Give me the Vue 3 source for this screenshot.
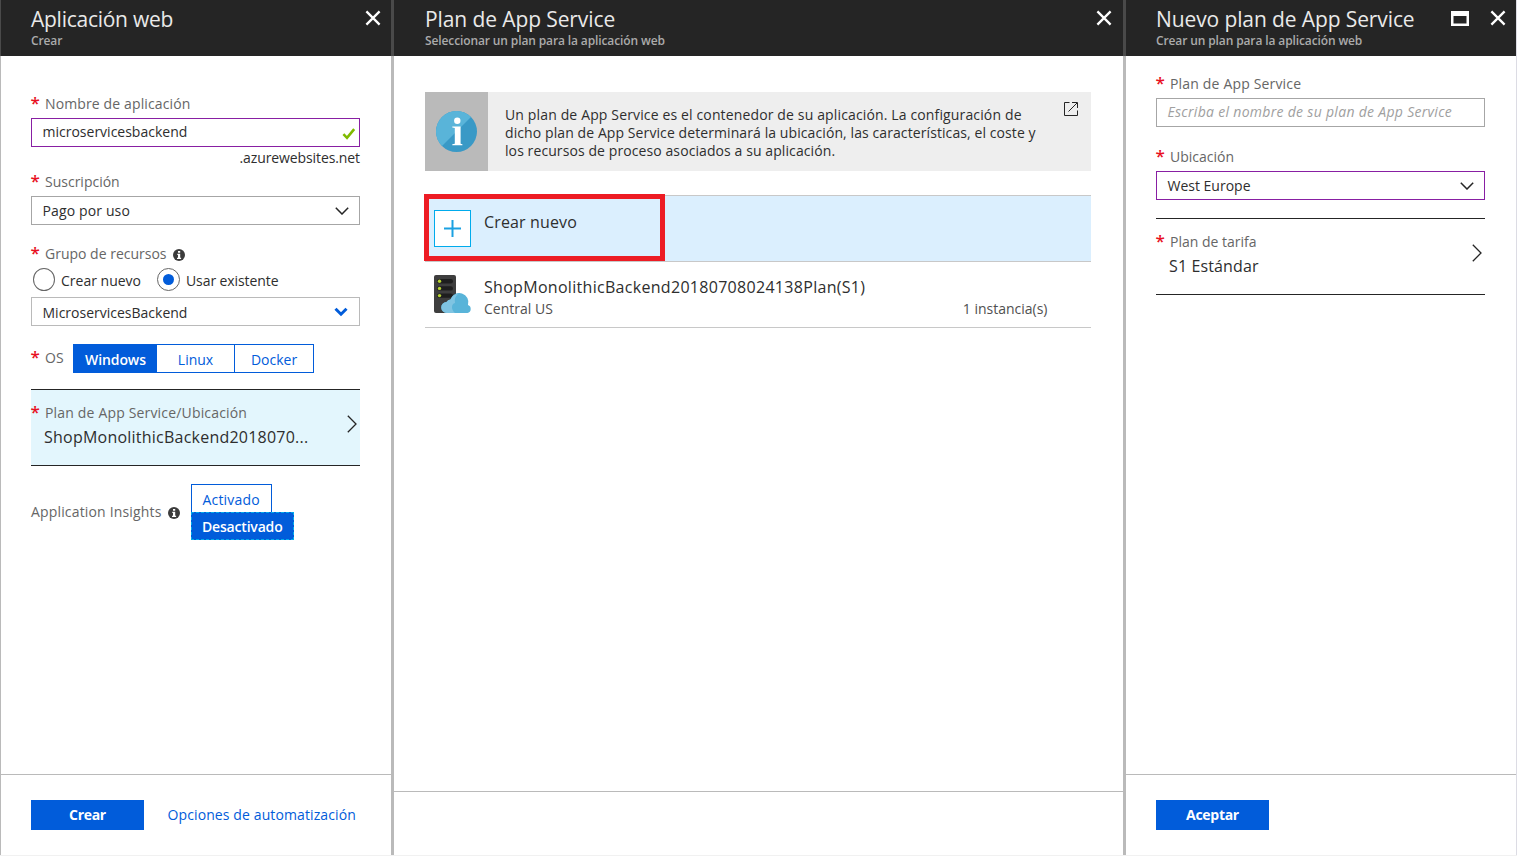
<script setup>
import { ref } from 'vue'

const appName = ref('microservicesbackend')
const systems = [
  { name: 'Windows', cls: 'win' },
  { name: 'Linux', cls: 'lin' },
  { name: 'Docker', cls: 'doc' }
]
const selectedOs = ref('Windows')
</script>

<template>
  <div class="portal">
    <div class="edge"><i></i></div>

    <section class="blade">
      <header class="head">
        <div>
          <h1 class="t1">Aplicación web</h1>
          <p>Crear</p>
        </div>
        <div class="tools">
          <svg width="16" height="16" viewBox="0 0 16 16"><path d="M1.4 1.4 14.6 14.6M14.6 1.4 1.4 14.6" /></svg>
        </div>
      </header>

      <main class="body first">
        <div class="label w1"><b>*</b><span>Nombre de aplicación</span></div>
        <div class="field active">
          <span>{{ appName }}</span>
          <svg class="check" width="14" height="12" viewBox="0 0 14 12"><path d="M1.4 6.2 5 9.8 12.2 1.2" /></svg>
        </div>
        <div class="suffix">.azurewebsites.net</div>

        <div class="label lb-sub"><b>*</b><span>Suscripción</span></div>
        <div class="field select">
          <span class="w1">Pago por uso</span>
          <svg class="chev" width="14" height="8" viewBox="0 0 14 8"><path d="M.8.8 7 7 13.2.8" /></svg>
        </div>

        <div class="label lb-group">
          <b>*</b><span>Grupo de recursos</span>
          <svg class="info" width="12" height="12" viewBox="0 0 12 12"><circle cx="6" cy="6" r="6" /><path d="M5 2h2.2v1.8H5zM4.3 4.8h2.9v3.9h.9V10H4V8.7h1V6h-.7z" /></svg>
        </div>
        <div class="radios">
          <i class="radio"></i><span>Crear nuevo</span>
          <i class="radio on"></i><span class="ue">Usar existente</span>
        </div>
        <div class="field select group">
          <span>MicroservicesBackend</span>
          <svg class="chev bold" width="14" height="10" viewBox="0 0 14 10"><path d="M1.5 1.8 7 7.2 12.5 1.8" /></svg>
        </div>

        <div class="os">
          <div class="label"><b>*</b><span>OS</span></div>
          <div class="seg">
            <span v-for="s in systems" :key="s.name" :class="[s.cls, { sel: s.name === selectedOs }]">{{ s.name }}</span>
          </div>
        </div>

        <div class="card blue">
          <div>
            <div class="label w2"><b>*</b><span>Plan de App Service/Ubicación</span></div>
            <div class="value w3">ShopMonolithicBackend2018070...</div>
          </div>
          <svg class="next" width="10" height="18" viewBox="0 0 10 18"><path d="M.8.8 9 9 .8 17.2" /></svg>
        </div>

        <div class="insights">
          <span class="ai">Application Insights</span>
          <svg class="info" width="12" height="12" viewBox="0 0 12 12"><circle cx="6" cy="6" r="6" /><path d="M5 2h2.2v1.8H5zM4.3 4.8h2.9v3.9h.9V10H4V8.7h1V6h-.7z" /></svg>
          <div class="toggle">
            <span class="act">Activado</span>
            <span class="deact">Desactivado</span>
          </div>
        </div>
      </main>

      <footer class="foot">
        <button class="primary">Crear</button>
        <a class="link">Opciones de automatización</a>
      </footer>
    </section>

    <div class="edge"><i></i></div>

    <section class="blade">
      <header class="head mid">
        <div>
          <h1 class="t2">Plan de App Service</h1>
          <p>Seleccionar un plan para la aplicación web</p>
        </div>
        <div class="tools">
          <svg width="16" height="16" viewBox="0 0 16 16"><path d="M1.4 1.4 14.6 14.6M14.6 1.4 1.4 14.6" /></svg>
        </div>
      </header>

      <main class="body second">
        <div class="notice">
          <div class="mark">
            <svg width="41" height="41" viewBox="0 0 41 41">
              <circle cx="20.5" cy="20.5" r="20.5" fill="#3999c6" />
              <path d="M6 35A20.5 20.5 0 1 1 35 6z" fill="#59b4d9" />
              <circle cx="21.3" cy="9.8" r="3.2" fill="#fff" />
              <path d="M16.3 15.5h8.3v17.2l1.8.5v1H16.3v-1l2.5-.5V17l-2.5-.5z" fill="#fff" />
            </svg>
          </div>
          <p>
            <span class="n1">Un plan de App Service es el contenedor de su aplicación. La configuración de</span>
            <span class="n2">dicho plan de App Service determinará la ubicación, las características, el coste y</span>
            <span class="n2">los recursos de proceso asociados a su aplicación.</span>
          </p>
          <svg class="ext" width="14" height="14" viewBox="0 0 14 14"><path d="M5.5.5h-5v13h13v-5M4.5 9.5 13 1M8 .5h5.5V6" /></svg>
        </div>

        <div class="row create">
          <div class="plus">
            <svg width="19" height="19" viewBox="0 0 19 19"><path d="M9.5 1v17M1 9.5h17" /></svg>
          </div>
          <span class="name">Crear nuevo</span>
          <div class="highlight"></div>
        </div>
        <div class="row plan">
          <svg class="server" width="38" height="39" viewBox="0 0 38 39">
            <path d="M2 0h18a2 2 0 0 1 2 2v36H2a2 2 0 0 1-2-2V2a2 2 0 0 1 2-2z" fill="#3e3e3e" />
            <g fill="#1e1e1e">
              <rect x="3" y="4" width="16" height="4.4" rx="2.2" />
              <rect x="3" y="11.2" width="16" height="4.4" rx="2.2" />
              <rect x="3" y="18.4" width="16" height="4.4" rx="2.2" />
            </g>
            <g fill="#b8d432">
              <circle cx="5.5" cy="6.2" r="1.7" />
              <circle cx="5.5" cy="13.4" r="1.7" />
              <circle cx="5.5" cy="20.6" r="1.7" />
            </g>
            <path d="M13 38a5.5 5.5 0 0 1-.5-11 5 5 0 0 1 4-2.5A9 9 0 0 1 34 30a4.200 4.200 0 0 1-.5 8z" fill="#59b4d9" />
            <path d="M13 38a5.5 5.5 0 0 1-.5-11 5 5 0 0 1 4-2.5A9 9 0 0 1 24 19a9 9 0 0 0-3 9c-4 1-4 7 0 10z" fill="#7fc4e2" />
          </svg>
          <div class="desc">
            <div class="name w4">ShopMonolithicBackend20180708024138Plan(S1)</div>
            <div class="meta"><span>Central US</span><span>1 instancia(s)</span></div>
          </div>
        </div>
      </main>

      <footer class="foot short"></footer>
    </section>

    <div class="edge"><i></i></div>

    <section class="blade">
      <header class="head">
        <div>
          <h1 class="t3">Nuevo plan de App Service</h1>
          <p>Crear un plan para la aplicación web</p>
        </div>
        <div class="tools">
          <svg class="max" width="18" height="15" viewBox="0 0 18 15"><path d="M0 0h18v15H0zM2.5 5v7.5h13V5z" /></svg>
          <svg width="16" height="16" viewBox="0 0 16 16"><path d="M1.4 1.4 14.6 14.6M14.6 1.4 1.4 14.6" /></svg>
        </div>
      </header>

      <main class="body third">
        <div class="label w2"><b>*</b><span>Plan de App Service</span></div>
        <div class="field"><em>Escriba el nombre de su plan de App Service</em></div>

        <div class="label lb-loc"><b>*</b><span>Ubicación</span></div>
        <div class="field select active">
          <span>West Europe</span>
          <svg class="chev" width="14" height="8" viewBox="0 0 14 8"><path d="M.8.8 7 7 13.2.8" /></svg>
        </div>

        <div class="card tier">
          <div>
            <div class="label"><b>*</b><span>Plan de tarifa</span></div>
            <div class="value w1">S1 Estándar</div>
          </div>
          <svg class="next" width="10" height="18" viewBox="0 0 10 18"><path d="M.8.8 9 9 .8 17.2" /></svg>
        </div>
      </main>

      <footer class="foot">
        <button class="primary">Aceptar</button>
      </footer>
    </section>

    <div class="edge last"><i></i></div>
  </div>
</template>

<style>
body {
  background: #f1f1f1;
}
</style>

<style scoped>
.portal {
  display: grid;
  grid-template-columns: 1px 390px 3px 729px 3px 390px 1px;
  height: 855px;
  overflow: hidden;
  background: #fff;
  color: #2e2e2e;
  font: 14px/20px "Open Sans", "Noto Sans", sans-serif;
  white-space: nowrap;
}
svg {
  display: block;
  flex: none;
}
.edge {
  background: #bababa;
}
.edge i {
  display: block;
  height: 56px;
  background: #4a4a4a;
}
.edge.last,
.edge.last i {
  background: #dcdce4;
}
.blade {
  display: flex;
  flex-direction: column;
  min-width: 0;
}

.head {
  display: flex;
  justify-content: space-between;
  height: 56px;
  box-sizing: border-box;
  padding: 7px 10px 0 30px;
  background: #252525;
}
.head.mid {
  padding: 7px 11px 0 31px;
}
.head h1 {
  margin: 0;
  font-size: 21px;
  line-height: 24px;
  font-weight: 400;
  color: #e9e9e9;
}
.head p {
  margin: 2px 0 0;
  font-size: 12px;
  line-height: 16px;
  font-weight: 600;
  color: #ababab;
  letter-spacing: -0.12px;
}
.head .t1 {
  letter-spacing: -0.26px;
}
.head .t2 {
  letter-spacing: -0.1px;
}
.head .t3 {
  letter-spacing: -0.11px;
}
.tools {
  display: flex;
  gap: 21px;
  margin-top: 3px;
  align-items: flex-start;
}
.tools path {
  fill: none;
  stroke: #fff;
  stroke-width: 2.3;
}
.tools .max {
  margin-top: 1px;
}
.tools .max path {
  fill: #fff;
  fill-rule: evenodd;
  stroke: none;
}

.body {
  flex: 1;
  padding: 0 31px 0 30px;
}
.first {
  padding-top: 38px;
}
.second {
  padding: 36px 32px 0 31px;
}
.third {
  padding-top: 18px;
}

.label {
  display: flex;
  height: 20px;
  color: #666;
}
.label b {
  width: 14px;
  font-size: 17px;
  font-weight: 600;
  color: #e81123;
  line-height: 18px;
  text-indent: -0.5px;
}
.w1 {
  letter-spacing: 0.13px;
}
.w2 {
  letter-spacing: 0.17px;
}
.w3 {
  letter-spacing: 0.23px;
}
.w4 {
  letter-spacing: 0.3px;
}
.field {
  display: flex;
  align-items: center;
  justify-content: space-between;
  box-sizing: border-box;
  height: 29px;
  margin-top: 4px;
  padding: 0 10px 2px 10.5px;
  border: 1px solid #a6a6a6;
}
.field.select {
  padding-bottom: 0;
}
.field.active {
  border-color: #881fa3;
}
.field em {
  color: #a0a0a0;
  letter-spacing: 0.3px;
}
.check {
  margin: 4px -7px 0 0;
}
.check path {
  fill: none;
  stroke: #7fba00;
  stroke-width: 2.6;
}
.chev {
  margin-top: 1px;
}
.chev path {
  fill: none;
  stroke: #252525;
  stroke-width: 1.5;
}
.chev.bold {
  margin: -2px 1px 0 0;
}
.chev.bold path {
  stroke: #015cda;
  stroke-width: 3;
}
.suffix {
  margin-top: 1px;
  text-align: right;
  letter-spacing: -0.1px;
}
.lb-sub {
  margin-top: 4px;
}
.lb-group {
  margin-top: 19px;
}
.lb-loc {
  margin-top: 20px;
}
.info {
  margin: 5px 0 0 6.5px;
}
.info circle {
  fill: #3c3c3c;
}
.info path {
  fill: #fff;
}
.radios {
  display: flex;
  align-items: center;
  height: 23px;
  margin-top: 4px;
  padding-left: 2px;
}
.radios span {
  margin: 2px 16px 0 6px;
}
.radios .ue {
  letter-spacing: -0.09px;
}
.radio {
  display: grid;
  place-items: center;
  box-sizing: border-box;
  width: 22px;
  height: 23px;
  border: 1px solid #666;
  border-radius: 50%;
}
.radio.on {
  width: 23px;
}
.radio.on::after {
  content: "";
  width: 11px;
  height: 11px;
  border-radius: 50%;
  background: #015cda;
}
.field.group {
  margin-top: 6px;
  padding-top: 2px;
  border-color: #bababa;
}

.os {
  display: flex;
  margin-top: 18px;
}
.os .label {
  width: 42px;
  margin-top: 4px;
}
.seg {
  display: flex;
  box-sizing: border-box;
  height: 29px;
  width: 241px;
  border: 1px solid #015cda;
}
.seg span {
  flex: none;
  box-sizing: border-box;
  padding-top: 5px;
  height: 27px;
  text-align: center;
  color: #015cda;
}
.seg .win {
  width: 83px;
  letter-spacing: -0.1px;
}
.seg .lin {
  width: 77px;
}
.seg .doc {
  width: 79px;
  border-left: 1px solid #015cda;
}
.seg .sel {
  background: #015cda;
  color: #fff;
  font-weight: 600;
}
.card {
  display: flex;
  justify-content: space-between;
  box-sizing: border-box;
  height: 77px;
  padding: 13px 3.5px 0 0;
  border: solid #252525;
  border-width: 1px 0;
}
.blue {
  margin-top: 16px;
  background: #e3f6fd;
}
.value {
  margin: 3px 0 0 13px;
  font-size: 16px;
  line-height: 22px;
}
.next {
  margin-top: 11.5px;
}
.next path {
  fill: none;
  stroke: #252525;
  stroke-width: 1.3;
}
.tier {
  margin-top: 18px;
}

.insights {
  display: flex;
  margin-top: 18px;
}
.ai {
  margin-top: 18px;
  color: #666;
  letter-spacing: 0.16px;
}
.insights .info {
  margin-top: 23px;
}
.toggle {
  display: flex;
  flex-direction: column;
  align-items: flex-start;
  margin-left: 11px;
}
.toggle span {
  box-sizing: border-box;
  height: 28px;
  padding: 5px 0 0 10.5px;
}
.toggle .act {
  width: 81px;
  border: 1px solid #015cda;
  border-bottom: 0;
  color: #015cda;
  letter-spacing: 0.2px;
}
.toggle .deact {
  width: 103px;
  padding: 4px 0 0 10px;
  border: 1px dashed #00abec;
  background: #015cda;
  color: #fff;
  font-weight: 600;
  letter-spacing: -0.18px;
}

.foot {
  display: flex;
  align-items: flex-start;
  box-sizing: border-box;
  height: 81px;
  padding: 25px 30px 0;
  border-top: 1px solid #bababa;
}
.short {
  height: 64px;
}
.primary {
  width: 113px;
  height: 30px;
  padding: 0;
  border: 0;
  background: #015cda;
  color: #fff;
  font: 700 14px/20px "Open Sans", "Noto Sans", sans-serif;
  letter-spacing: -0.3px;
}
.link {
  margin: 5px 0 0 23.5px;
  color: #015cda;
  letter-spacing: 0.11px;
}

.notice {
  display: flex;
  height: 79px;
  background: #eee;
}
.mark {
  display: grid;
  place-items: center;
  width: 63px;
  background: #bababa;
}
.notice p {
  width: 564px;
  margin: 14px 0 0 17px;
  line-height: 18px;
}
.notice p span {
  display: block;
}
.n1 {
  letter-spacing: 0.14px;
}
.n2 {
  letter-spacing: 0.09px;
}
.ext {
  margin: 10px 0 0 -5px;
}
.ext path {
  fill: none;
  stroke: #252525;
}
.row {
  position: relative;
  display: flex;
  box-sizing: border-box;
  border-bottom: 1px solid #c8c8c8;
}
.create {
  height: 67px;
  margin-top: 24px;
  padding: 14px 0 0 9px;
  border-top: 1px solid #c8c8c8;
  background: #dbeffe;
}
.plus {
  display: grid;
  place-items: center;
  box-sizing: border-box;
  width: 37px;
  height: 37px;
  border: 1px solid #00abec;
  background: #fff;
}
.plus path {
  fill: none;
  stroke: #1ba1e2;
  stroke-width: 2;
}
.name {
  font-size: 16px;
  line-height: 22px;
}
.create .name {
  margin: 1px 0 0 13px;
  letter-spacing: 0.14px;
}
.highlight {
  position: absolute;
  left: -1px;
  top: -2px;
  box-sizing: border-box;
  width: 241px;
  height: 67px;
  border: 5px solid #ed1c24;
}
.plan {
  height: 66px;
  padding: 13px 43.5px 0 9px;
}
.desc {
  flex: 1;
  margin: 1px 0 0 12px;
}
.meta {
  display: flex;
  justify-content: space-between;
  margin-top: 1px;
  color: #505050;
}
</style>
